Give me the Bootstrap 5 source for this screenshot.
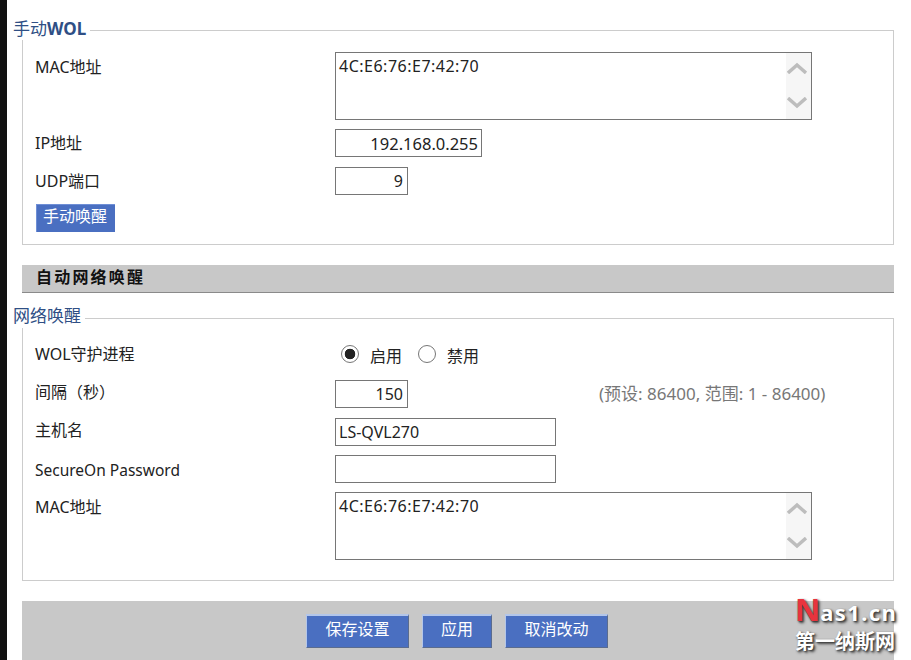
<!DOCTYPE html>
<html lang="zh-CN">
<head>
  <meta charset="UTF-8" />
  <title>WOL</title>
  <link href="https://cdn.jsdelivr.net/npm/bootstrap@5.3.2/dist/css/bootstrap.min.css" rel="stylesheet">
  <style>
    html, body { height: 660px; overflow: hidden; }
    body {
      position: relative;
      background: #fff;
      color: #222;
      border-left: 7px solid #111;
      padding: 20px 17px 0 15px;
      font: 16px/22px "Noto Sans", "Noto Sans CJK SC", sans-serif;
    }

    /* fieldsets */
    .wol-group {
      border: 1px solid #ccc;
      padding: 12px 12px 12px;
      margin-bottom: 20px;
    }
    .wol-group.is-last { padding-bottom: 20px; }
    .wol-group legend {
      float: none;
      width: auto;
      margin: 0 0 0 -22px;
      padding: 0 4px 2px 0;
      font: 17px/18px "Noto Sans", "Noto Sans CJK SC", sans-serif;
      color: #2f4f85;
      background: #fff;
    }
    .wol-group.is-last legend { line-height: 16px; padding-bottom: 4px; }
    .wol-group legend b { font-weight: 700; }

    /* rows */
    .wol-row { display: flex; align-items: center; margin-bottom: 9px; }
    .wol-row.is-top { align-items: flex-start; }
    .wol-row.is-top .wol-label { padding-top: 4px; }
    .wol-row.wide-gap { margin-bottom: 10px; }
    .wol-row.radio-row { height: 28px; margin-bottom: 12px; }
    .wol-label { width: 300px; flex: none; }
    .wol-label.cn-only { padding-bottom: 4px; }
    .wol-label.latin { font-size: 15.5px; padding-top: 2px; }

    /* inputs */
    .wol-input {
      height: 28px;
      border: 1px solid #767676;
      border-radius: 0;
      padding: 0 3px;
      font: inherit;
      color: #222;
      outline: none;
    }
    .w-ip { width: 147px; text-align: right; font-size: 16.5px; }
    .w-num { width: 73px; text-align: right; padding-right: 4px; }
    .w-text { width: 221px; }
    .wol-hint { margin-left: 191px; color: #777; font-size: 17px; }

    .wol-area {
      display: flex;
      width: 477px;
      height: 68px;
      border: 1px solid #767676;
    }
    .wol-area textarea {
      flex: 1;
      border: 0;
      padding: 2px 3px;
      resize: none;
      overflow: hidden;
      outline: none;
      font: inherit;
      letter-spacing: .5px;
      color: #222;
    }
    .wol-scroll {
      width: 25px;
      flex: none;
      padding: 9px 4px 10px 0;
      background: #f6f6f6;
      display: flex;
      flex-direction: column;
      justify-content: space-between;
      align-items: flex-end;
    }

    /* radios */
    .wol-radio.form-check-input {
      width: 18px;
      height: 18px;
      margin: 0;
      border: 1px solid #767676;
      background-color: #fff;
    }
    .wol-radio.form-check-input:checked {
      background-color: #fff;
      border-color: #767676;
      background-image: radial-gradient(circle, #222 0 5px, transparent 5.6px);
    }
    .radio-opts { padding-left: 6px; }
    .radio-txt { margin: 4px 16px 0 11px; }

    /* buttons */
    .wol-btn.btn {
      --bs-btn-bg: #4a6fc1;
      --bs-btn-color: #fff;
      --bs-btn-hover-bg: #4a6fc1;
      --bs-btn-hover-color: #fff;
      font: 16px/22px "Noto Sans", "Noto Sans CJK SC", sans-serif;
      border-radius: 0;
      border: 0;
      height: 28px;
      width: 79px;
      padding: 0 2px 5px 0;
      margin-left: 1px;
      border-top: 1px solid #6f8fd6;
      border-left: 1px solid #6f8fd6;
    }
    .wol-btn.btn.big {
      height: 34px;
      margin-left: 0;
      padding: 0 0 5px;
      border-top: 2px solid #b3c6ea;
      border-left: 1px solid #b3c6ea;
      border-bottom: 1px solid #5b6c8e;
      border-right: 1px solid #5b6c8e;
    }
    .wol-btn.btn.btn-save, .wol-btn.btn.btn-cancel { width: 103px; }
    .wol-btn.btn.btn-apply { width: 70px; }

    /* section bar + footer */
    .wol-bar {
      height: 28px;
      background: #c8c8c8;
      border-bottom: 1px solid #8a8a8a;
      padding-left: 14px;
      margin-bottom: 15px;
      font-weight: 700;
      font-size: 16px;
      line-height: 25px;
      letter-spacing: 2.2px;
      color: #111;
    }
    .wol-foot {
      height: 59px;
      background: #c8c8c8;
      padding-top: 13px;
      padding-left: 284px;
      gap: 13px;
    }

    /* watermark */
    .wol-mark {
      position: absolute;
      left: 788px;
      top: 592px;
      color: #fff;
      font-family: "Noto Sans", "Noto Sans CJK SC", sans-serif;
      font-weight: 700;
      text-shadow: 1px 1px 2px #333, 2px 2px 3px #555;
    }
    .wol-mark .l1 { font-size: 22px; line-height: 34px; letter-spacing: 1.4px; white-space: nowrap; }
    .wol-mark .l1 span { color: #e8343e; font-size: 31px; letter-spacing: 0; }
    .wol-mark .l2 { font-size: 20px; line-height: 26px; white-space: nowrap; }
  </style>
</head>
<body>

  <fieldset class="wol-group">
    <legend>手动<b>WOL</b></legend>
    <div class="wol-row is-top">
      <div class="wol-label">MAC地址</div>
      <div class="wol-area">
        <textarea readonly>4C:E6:76:E7:42:70</textarea>
        <div class="wol-scroll">
          <svg width="20" height="12" viewBox="0 0 20 12"><path d="M1 11 10 3l9 8" fill="none" stroke="#bdbdbd" stroke-width="3.4"/></svg>
          <svg width="20" height="12" viewBox="0 0 20 12"><path d="M1 1l9 8 9-8" fill="none" stroke="#bdbdbd" stroke-width="3.4"/></svg>
        </div>
      </div>
    </div>
    <div class="wol-row wide-gap">
      <div class="wol-label">IP地址</div>
      <input class="wol-input w-ip" type="text" value="192.168.0.255">
    </div>
    <div class="wol-row">
      <div class="wol-label">UDP端口</div>
      <input class="wol-input w-num" type="text" value="9">
    </div>
    <button class="btn wol-btn" type="button">手动唤醒</button>
  </fieldset>

  <div class="wol-bar">自动网络唤醒</div>

  <fieldset class="wol-group is-last">
    <legend>网络唤醒</legend>
    <div class="wol-row radio-row">
      <div class="wol-label">WOL守护进程</div>
      <div class="d-flex align-items-center radio-opts">
        <input class="form-check-input wol-radio" type="radio" name="wol" checked>
        <span class="radio-txt">启用</span>
        <input class="form-check-input wol-radio" type="radio" name="wol">
        <span class="radio-txt">禁用</span>
      </div>
    </div>
    <div class="wol-row wide-gap">
      <div class="wol-label cn-only">间隔（秒）</div>
      <input class="wol-input w-num" type="text" value="150">
      <span class="wol-hint">(预设: 86400, 范围: 1 - 86400)</span>
    </div>
    <div class="wol-row">
      <div class="wol-label cn-only">主机名</div>
      <input class="wol-input w-text" type="text" value="LS-QVL270">
    </div>
    <div class="wol-row">
      <div class="wol-label latin">SecureOn Password</div>
      <input class="wol-input w-text" type="text">
    </div>
    <div class="wol-row is-top mb-0">
      <div class="wol-label">MAC地址</div>
      <div class="wol-area">
        <textarea readonly>4C:E6:76:E7:42:70</textarea>
        <div class="wol-scroll">
          <svg width="20" height="12" viewBox="0 0 20 12"><path d="M1 11 10 3l9 8" fill="none" stroke="#bdbdbd" stroke-width="3.4"/></svg>
          <svg width="20" height="12" viewBox="0 0 20 12"><path d="M1 1l9 8 9-8" fill="none" stroke="#bdbdbd" stroke-width="3.4"/></svg>
        </div>
      </div>
    </div>
  </fieldset>

  <div class="wol-foot d-flex align-items-start">
    <button class="btn wol-btn big btn-save" type="button">保存设置</button>
    <button class="btn wol-btn big btn-apply" type="button">应用</button>
    <button class="btn wol-btn big btn-cancel" type="button">取消改动</button>
  </div>

  <div class="wol-mark">
    <div class="l1"><span>N</span>as1.cn</div>
    <div class="l2">第一纳斯网</div>
  </div>

  <script src="https://cdn.jsdelivr.net/npm/bootstrap@5.3.2/dist/js/bootstrap.bundle.min.js"></script>
</body>
</html>
